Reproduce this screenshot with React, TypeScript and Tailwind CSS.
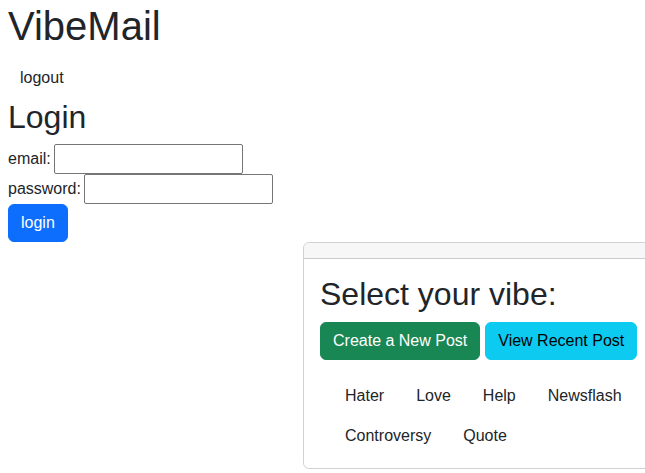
const font = { fontFamily: '"Liberation Sans", Arial, sans-serif' };

const vibes = ["Hater", "Love", "Help", "Newsflash", "Controversy", "Quote"];

const Field = ({ label, type }: { label: string; type: string }) => (
  <div className="flex flex-row items-center h-[30px]">
    <label className="mr-[3px]">{label}</label>
    <input
      type={type}
      className="w-[189px] h-[30px] border border-[#767676] rounded-[2px] bg-white px-[2px]"
    />
  </div>
);

export default function App() {
  return (
    <div
      style={font}
      className="w-full min-h-[473px] overflow-hidden bg-white text-[#212529] text-base leading-6 px-2 pt-[2px]"
    >
      <h1 className="text-[40px] leading-[48px] font-medium mb-2">VibeMail</h1>
      <nav className="flex flex-row">
        <a className="px-3 py-2 text-[#212529] cursor-pointer">logout</a>
      </nav>
      <h2 className="text-[32px] leading-[38.4px] font-medium mb-2">Login</h2>
      <form className="flex flex-col mt-[2px]">
        <Field label="email:" type="email" />
        <Field label="password:" type="password" />
        <div>
          <button
            type="button"
            className="px-3 py-1.5 border border-[#0d6efd] bg-[#0d6efd] text-white rounded-md leading-6"
          >
            login
          </button>
        </div>
      </form>
      <div className="ml-[295px] w-[400px] border border-black/[0.175] rounded-md">
        <div className="h-[16px] bg-black/[0.03] border-b border-black/[0.175] rounded-t-md" />
        <div className="px-4 pt-4 pb-3">
          <h2 className="text-[32px] leading-[38.4px] font-medium mb-2">Select your vibe:</h2>
          <div className="flex flex-row gap-[5px]">
            <button
              type="button"
              className="px-3 py-1.5 border border-[#198754] bg-[#198754] text-white rounded-md leading-6"
            >
              Create a New Post
            </button>
            <button
              type="button"
              className="px-3 py-1.5 border border-[#0dcaf0] bg-[#0dcaf0] text-black rounded-md leading-6"
            >
              View Recent Post
            </button>
          </div>
          <ul className="flex flex-row flex-wrap mt-4 pl-[9px] w-[340px]">
            {vibes.map((v) => (
              <li key={v}>
                <a className="block px-4 py-2 text-[#212529] cursor-pointer">{v}</a>
              </li>
            ))}
          </ul>
        </div>
      </div>
    </div>
  );
}
